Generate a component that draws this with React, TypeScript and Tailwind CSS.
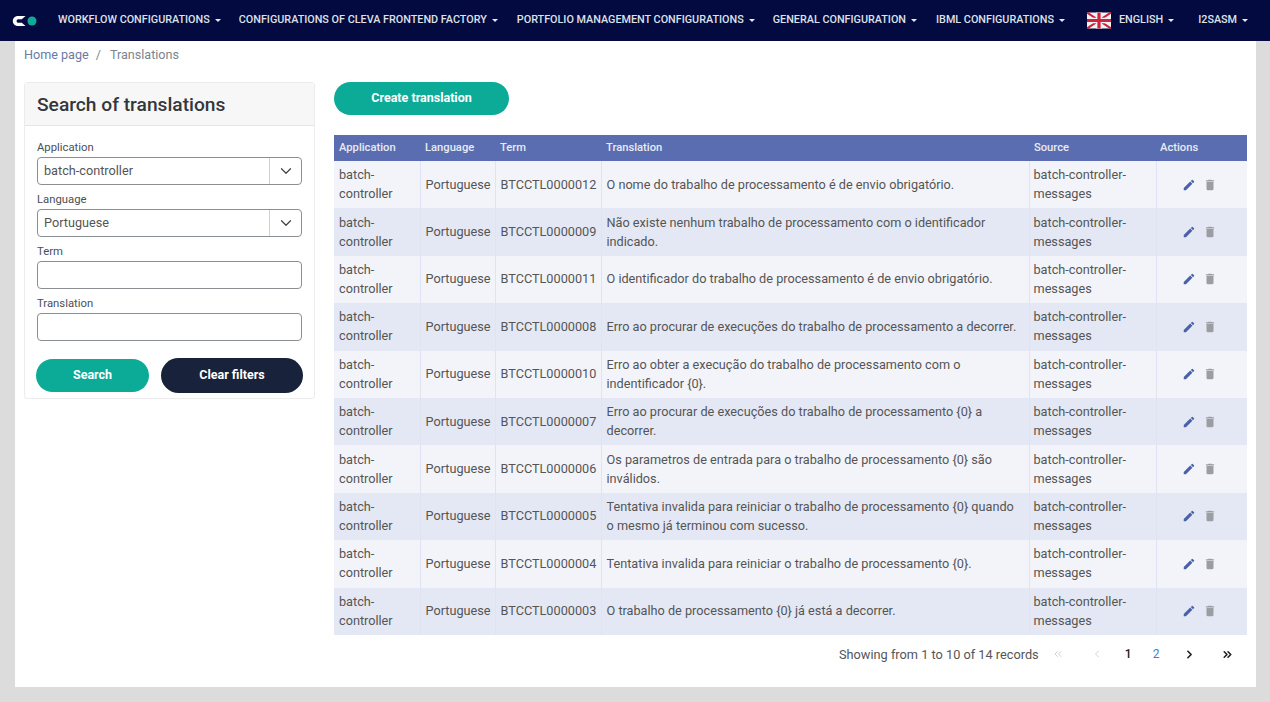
import React from "react";
import { ChevronDown, ChevronRight, ChevronsRight, ChevronLeft, ChevronsLeft } from "lucide-react";
import { MdEdit, MdDelete } from "react-icons/md";

const rows: string[] = [
  "BTCCTL0000012|O nome do trabalho de processamento é de envio obrigatório.",
  "BTCCTL0000009|Não existe nenhum trabalho de processamento com o identificador indicado.",
  "BTCCTL0000011|O identificador do trabalho de processamento é de envio obrigatório.",
  "BTCCTL0000008|Erro ao procurar de execuções do trabalho de processamento a decorrer.",
  "BTCCTL0000010|Erro ao obter a execução do trabalho de processamento com o indentificador {0}.",
  "BTCCTL0000007|Erro ao procurar de execuções do trabalho de processamento {0} a decorrer.",
  "BTCCTL0000006|Os parametros de entrada para o trabalho de processamento {0} são inválidos.",
  "BTCCTL0000005|Tentativa invalida para reiniciar o trabalho de processamento {0} quando o mesmo já terminou com sucesso.",
  "BTCCTL0000004|Tentativa invalida para reiniciar o trabalho de processamento {0}.",
  "BTCCTL0000003|O trabalho de processamento {0} já está a decorrer.",
];

function Caret() {
  return <span className="ml-[5px] inline-block w-0 h-0 border-x-[3px] border-x-transparent border-t-[3px] border-t-[#e8e8ef] align-middle" />;
}

function NavItem({ label, className }: { label: string; className: string }) {
  return (
    <span className={"flex items-center whitespace-nowrap text-[10.8px] font-medium text-[#dfe1ea] " + className}>
      {label}
      <Caret />
    </span>
  );
}

function Flag() {
  return (
    <svg width="24" height="17" viewBox="0 0 60 40" className="ml-[22px]">
      <rect width="60" height="40" fill="#f2f2f6" />
      <path d="M0 0L60 40M60 0L0 40" stroke="#c9203a" strokeWidth="5" />
      <path d="M30 0V40M0 20H60" stroke="#f2f2f6" strokeWidth="14" />
      <path d="M30 0V40M0 20H60" stroke="#d2223e" strokeWidth="8" />
    </svg>
  );
}

function Field({ label, value, select }: { label: string; value?: string; select?: boolean }) {
  return (
    <div className="flex flex-col">
      <label className="text-[11.300px] leading-[14px] h-[17px] pt-[1px] text-[#4b4f55]">{label}</label>
      <div className="flex h-[28px] border border-[#8b8f94] rounded-[4px] bg-white">
        <div className="flex-1 pl-[6px] text-[12.700px] leading-[26px] text-[#555]">{value}</div>
        {select && (
          <div className="w-[32px] border-l border-[#d0d3d6] flex items-center justify-center">
            <ChevronDown size={18} strokeWidth={1.6} className="text-[#444]" />
          </div>
        )}
      </div>
    </div>
  );
}

export default function App() {
  return (
    <div className="h-[702px] w-[1270px] overflow-hidden bg-[#dcdcdc] font-['Roboto',sans-serif]">
      <nav className="h-[41px] bg-[#020a3f] flex items-center pl-[12px]">
        <svg width="25" height="12" viewBox="0 0 25 12">
          <path d="M13.500 1H6C3 1 .8 3.200 .8 6S3 11 6 11H13.500L9.800 7.800H6.300C5.300 7.800 4.600 7 4.600 6S5.300 4.200 6.300 4.200H9.800Z" fill="#ffffff" />
          <circle cx="20" cy="6" r="4.500" fill="#10a99a" />
        </svg>
        <NavItem label="WORKFLOW CONFIGURATIONS" className="ml-[21px]" />
        <NavItem label="CONFIGURATIONS OF CLEVA FRONTEND FACTORY" className="ml-[18px]" />
        <NavItem label="PORTFOLIO MANAGEMENT CONFIGURATIONS" className="ml-[19px]" />
        <NavItem label="GENERAL CONFIGURATION" className="ml-[18px]" />
        <NavItem label="IBML CONFIGURATIONS" className="ml-[19px]" />
        <Flag />
        <NavItem label="ENGLISH" className="ml-[8px]" />
        <NavItem label="I2SASM" className="ml-[24px]" />
      </nav>

      <main className="ml-[15px] w-[1241px] h-[646px] bg-white pl-[9px] pr-[9px]">
        <div className="h-[41px] pt-[5px] text-[12.600px] leading-[18px] flex">
          <span className="text-[#6b79a6]">Home page</span>
          <span className="text-[#7b8794] mx-[7px]">/</span>
          <span className="text-[#7a858e] ml-[2px]">Translations</span>
        </div>
        <div className="flex gap-[19px] items-start">
          <aside className="w-[291px] h-[317px] border border-[#ececec] rounded-[3px] shrink-0">
            <div className="h-[43px] bg-[#f7f7f7] border-b border-[#e6e6e6] pl-[12px] text-[19.200px] font-medium text-[#33373b] leading-[43px]">
              Search of translations
            </div>
            <div className="px-[12px] pt-[14px] flex flex-col gap-[7px]">
              <Field label="Application" value="batch-controller" select />
              <Field label="Language" value="Portuguese" select />
              <Field label="Term" />
              <Field label="Translation" />
            </div>
            <div className="flex items-center pl-[11px] mt-[17px] gap-[12px]">
              <button className="w-[113px] h-[33px] rounded-full bg-[#0cab97] text-white text-[12.500px] font-bold">Search</button>
              <button className="w-[142px] h-[35px] rounded-full bg-[#18233b] text-white text-[12.500px] font-bold">Clear filters</button>
            </div>
          </aside>
          <section className="w-[913px]">
            <button className="block w-[175px] h-[33px] rounded-full bg-[#0cab97] text-white text-[12.500px] font-bold">Create translation</button>
            <table className="mt-[20px] w-[913px] table-fixed border-collapse text-[12.700px] leading-[19px] text-[#555]">
              <colgroup>
                <col className="w-[86px]" />
                <col className="w-[75px]" />
                <col className="w-[106px]" />
                <col className="w-[428px]" />
                <col className="w-[127px]" />
                <col className="w-[91px]" />
              </colgroup>
              <thead>
                <tr className="h-[26px] bg-[#5a6db0] text-[#e8ebf5] text-[11.200px] text-left">
                  <th className="pl-[5px] pb-[2px] font-medium">Application</th>
                  <th className="pl-[5px] pb-[2px] font-medium">Language</th>
                  <th className="pl-[5px] pb-[2px] font-medium">Term</th>
                  <th className="pl-[5px] pb-[2px] font-medium">Translation</th>
                  <th className="pl-[5px] pb-[2px] font-medium">Source</th>
                  <th className="pl-[4px] pb-[2px] font-medium">Actions</th>
                </tr>
              </thead>
              <tbody>
                {rows.map((r, i) => {
                  const [term, text] = r.split("|");
                  return (
                    <tr key={term} className={"h-[47.400px] " + (i % 2 ? "bg-[#e4e8f4]" : "bg-[#f2f4fa]")}>
                      <td className="pl-[5px] pr-[5px] pb-[1px] border-r border-[#dfe3f2]">batch-controller</td>
                      <td className="pl-[5px] pb-[1px] border-r border-[#dfe3f2] whitespace-nowrap">Portuguese</td>
                      <td className="pl-[5px] pb-[1px] border-r border-[#dfe3f2] whitespace-nowrap">{term}</td>
                      <td className="pl-[5px] pr-[5px] pb-[1px] border-r border-[#dfe3f2]">{text}</td>
                      <td className="pl-[4px] pr-[5px] pb-[1px] border-r border-[#dfe3f2]">batch-controller-messages</td>
                      <td>
                        <div className="flex items-center pl-[25px] gap-[7px]">
                          <MdEdit size={14} className="text-[#4a61a8]" />
                          <MdDelete size={14} className="text-[#9a9ea3]" />
                        </div>
                      </td>
                    </tr>
                  );
                })}
              </tbody>
            </table>
            <div className="flex items-center h-[39px] text-[12.750px] text-[#555] pl-[505px]">
              <span>Showing from 1 to 10 of 14 records</span>
              <ChevronsLeft size={12} className="ml-[13px] text-[#cfd3dc]" />
              <ChevronLeft size={12} className="ml-[27px] text-[#cfd3dc]" />
              <span className="ml-[22px] w-[8px] text-[12px] font-medium text-[#222]">1</span>
              <span className="ml-[20px] w-[8px] text-[12px] text-[#3f7fbf]">2</span>
              <ChevronRight size={13} strokeWidth={3} className="ml-[22px] text-[#222]" />
              <ChevronsRight size={13} strokeWidth={3} className="ml-[25px] text-[#222]" />
            </div>
          </section>
        </div>
      </main>
    </div>
  );
}
